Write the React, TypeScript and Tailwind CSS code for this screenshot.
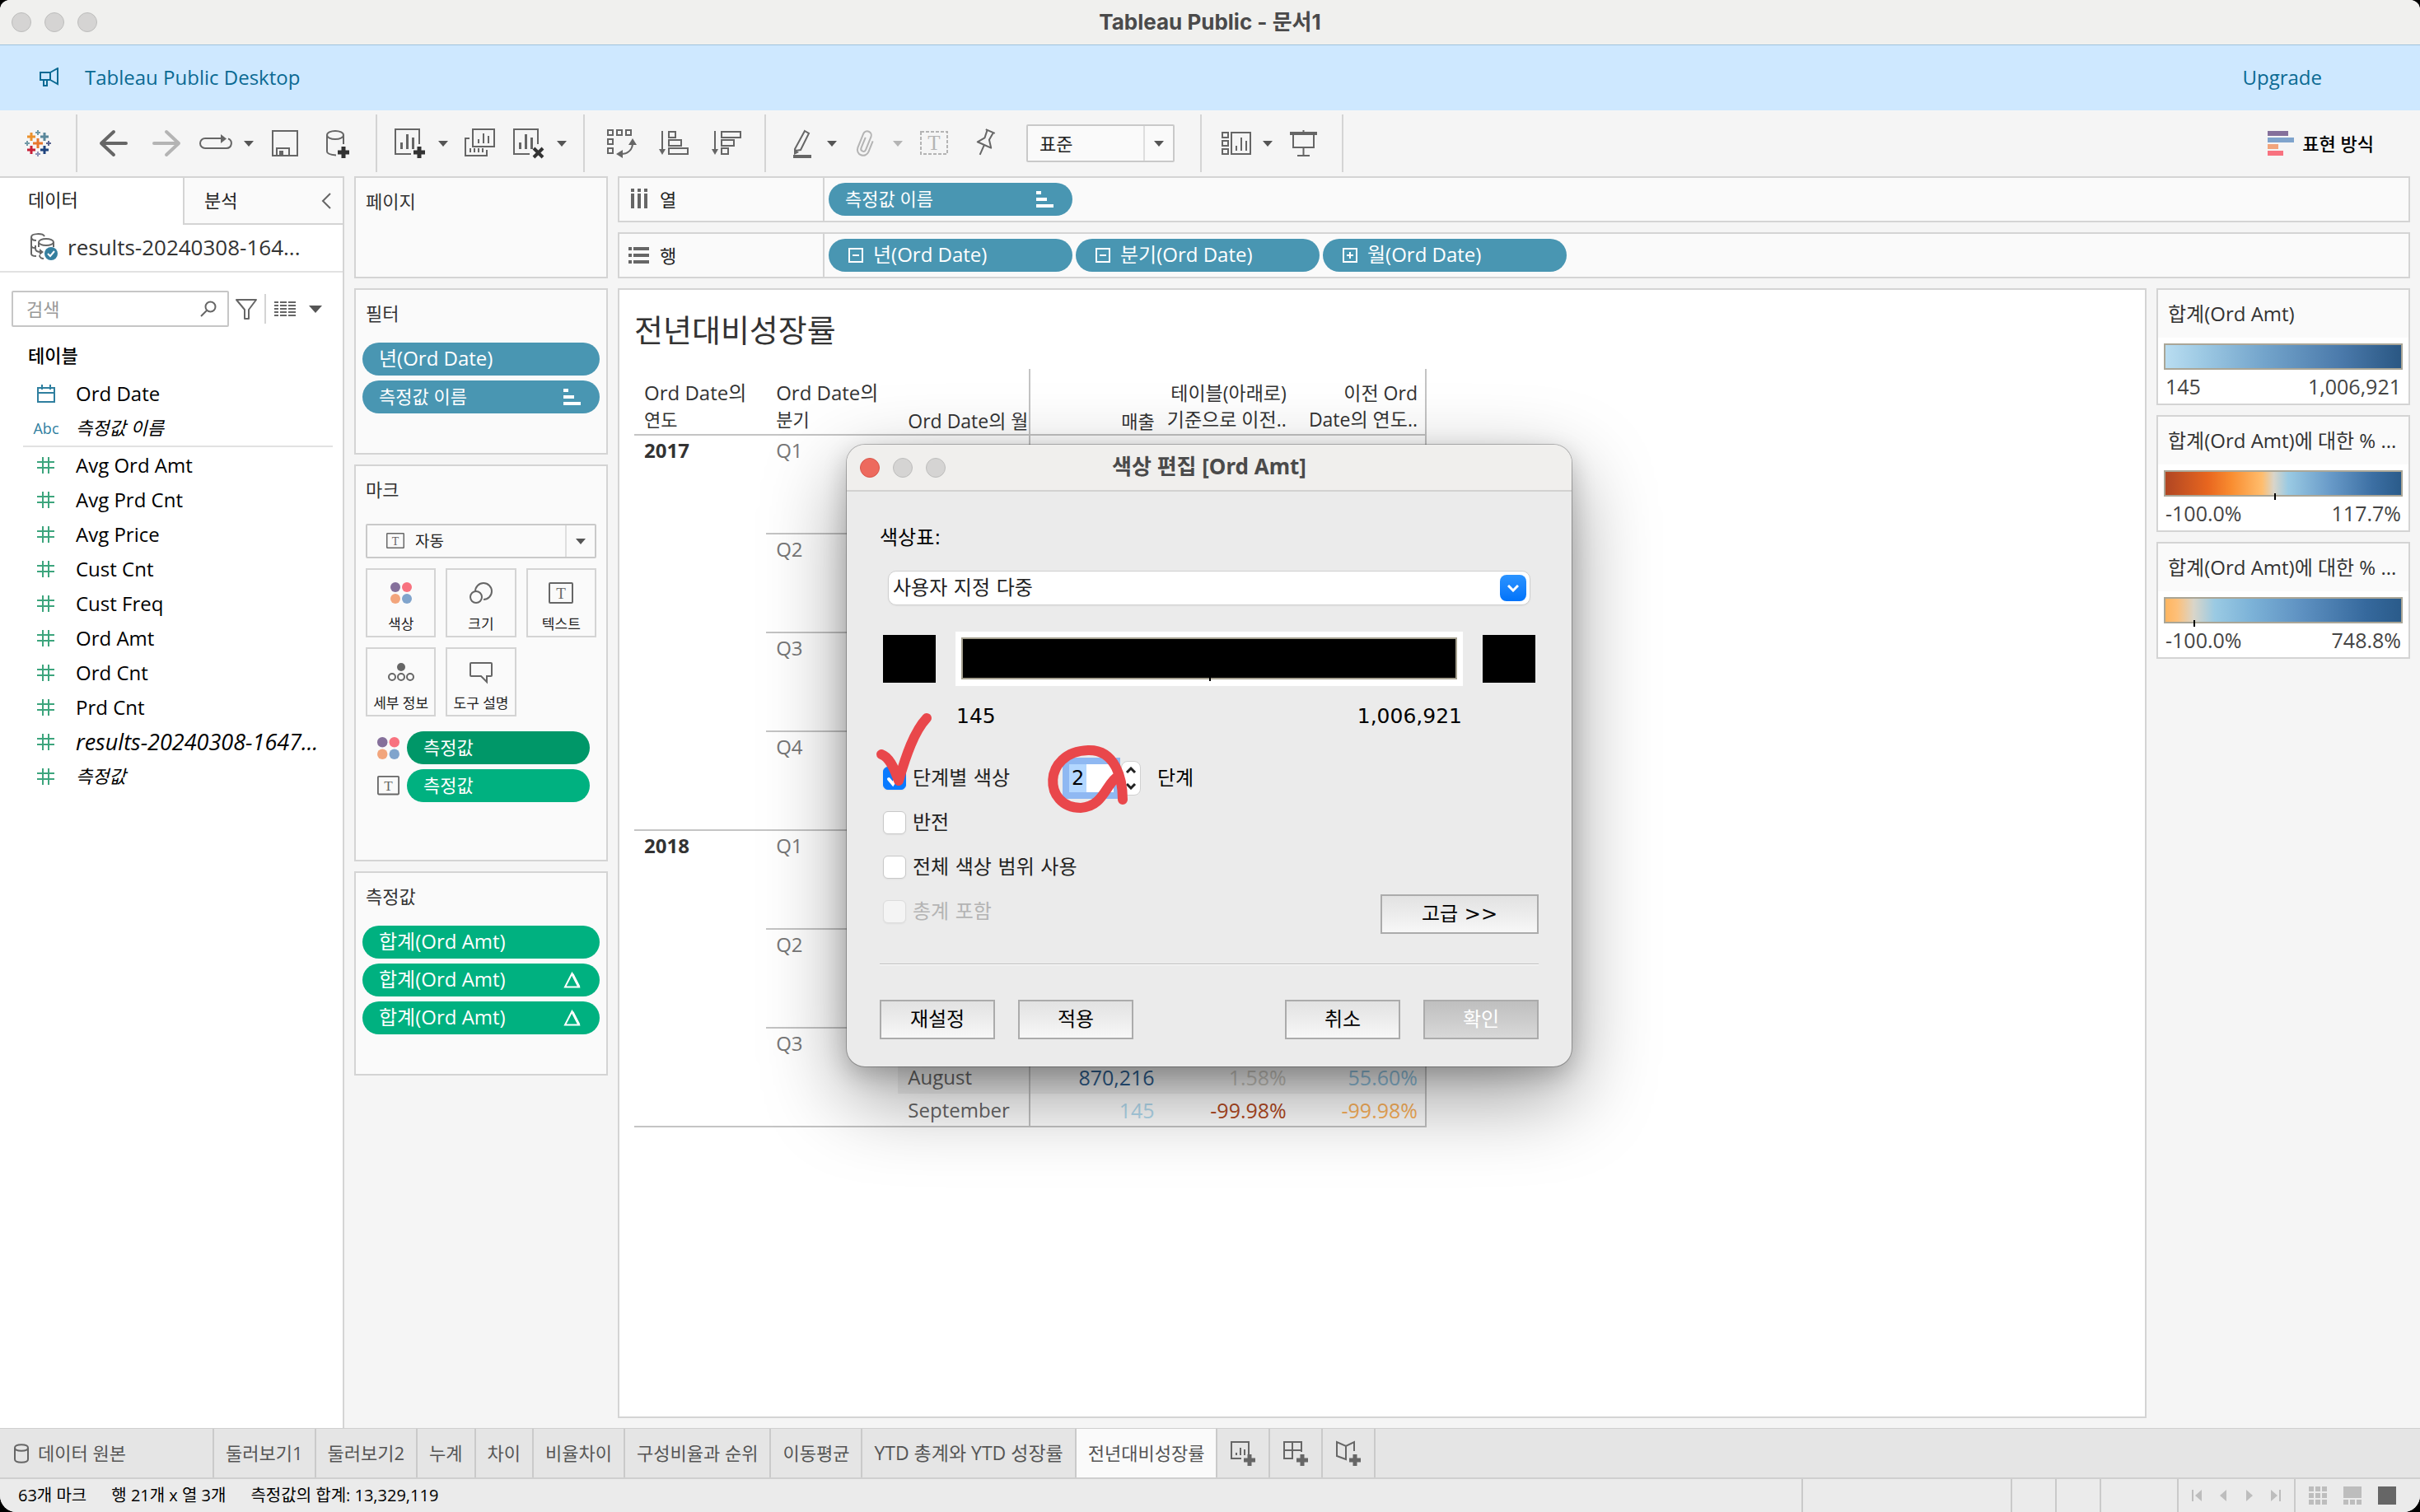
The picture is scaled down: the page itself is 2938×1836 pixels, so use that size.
import type { ReactNode } from "react";
import clsx from "clsx";

const fields = [
  "Avg Ord Amt",
  "Avg Prd Cnt",
  "Avg Price",
  "Cust Cnt",
  "Cust Freq",
  "Ord Amt",
  "Ord Cnt",
  "Prd Cnt",
];

const sheets = [
  "둘러보기1",
  "둘러보기2",
  "누계",
  "차이",
  "비율차이",
  "구성비율과 순위",
  "이동평균",
  "YTD 총계와 YTD 성장률",
  "전년대비성장률",
];

const years = [
  { year: "2017", quarters: ["Q1", "Q2", "Q3", "Q4"] },
  { year: "2018", quarters: ["Q1", "Q2", "Q3"] },
];

type Month = { name: string; cells: { value: string; color: string }[] };

const months: Record<string, Month> = {
  "2018-Q3-1": {
    name: "August",
    cells: [
      { value: "870,216", color: "text-[#2f5f8f]" },
      { value: "1.58%", color: "text-[#c8c6bf]" },
      { value: "55.60%", color: "text-[#8fbfdb]" },
    ],
  },
  "2018-Q3-2": {
    name: "September",
    cells: [
      { value: "145", color: "text-[#b4dcf0]" },
      { value: "-99.98%", color: "text-[#b34a23]" },
      { value: "-99.98%", color: "text-[#fdb35c]" },
    ],
  },
};

const legends = [
  {
    title: "합계(Ord Amt)",
    min: "145",
    max: "1,006,921",
    ramp: "bg-[linear-gradient(90deg,#b9ddf1,#9ecae4_15%,#73a4cb_42%,#4a79aa_75%,#2a5783)]",
    tick: null,
  },
  {
    title: "합계(Ord Amt)에 대한 % ...",
    min: "-100.0%",
    max: "117.7%",
    ramp: "bg-[linear-gradient(90deg,#b04623,#e8661f_18%,#f98d30_28%,#ffbd6d_41%,#d9d5c9_46%,#9acae3_52%,#689ac8_70%,#3c6fa3_88%,#2a5b8a)]",
    tick: 46,
  },
  {
    title: "합계(Ord Amt)에 대한 % ...",
    min: "-100.0%",
    max: "748.8%",
    ramp: "bg-[linear-gradient(90deg,#ffb55f,#fdc07a_5%,#d9d5c9_12%,#9acae3_21%,#7db3d8_36%,#5f92c2_57%,#36699d_85%,#2a5b8a)]",
    tick: 12,
  },
];

const Glyph = ({
  children,
  className,
  box = 40,
}: {
  children: ReactNode;
  className?: string;
  box?: number;
}) => (
  <svg
    viewBox={`0 0 ${box} ${box}`}
    className={clsx("shrink-0", className ?? "size-10")}
    fill="none"
    stroke="#666"
    strokeWidth="2"
    aria-hidden="true"
  >
    {children}
  </svg>
);

const Caret = ({ className = "text-[#555]" }: { className?: string }) => (
  <svg
    viewBox="0 0 12 7"
    className={clsx("w-3 shrink-0", className)}
    aria-hidden="true"
  >
    <path d="M0 0h12L6 7z" fill="currentColor" />
  </svg>
);

const Tool = ({ label, children }: { label: string; children: ReactNode }) => (
  <button
    type="button"
    aria-label={label}
    className="flex h-full w-16 items-center justify-center"
  >
    {children}
  </button>
);

const SplitTool = ({
  label,
  children,
  caret,
}: {
  label: string;
  children: ReactNode;
  caret?: string;
}) => (
  <button
    type="button"
    aria-label={label}
    className="flex h-full w-20 items-center gap-[14px] pl-2"
  >
    {children}
    <Caret className={caret} />
  </button>
);

const ToolGroup = ({ children }: { children: ReactNode }) => (
  <div className="flex h-[70px] items-center border-r-2 border-[#d4d4d4] pl-3 pr-[14px]">
    {children}
  </div>
);

const TextMark = ({ className }: { className?: string }) => (
  <svg viewBox="0 0 30 26" className={clsx("shrink-0", className)} fill="none">
    <rect x="1" y="1" width="28" height="24" rx="1" stroke="#666" strokeWidth="2" />
    <text
      x="15"
      y="20"
      textAnchor="middle"
      fontSize="19"
      fill="#666"
      className="font-['Liberation_Serif',serif]"
    >
      T
    </text>
  </svg>
);

const ColorDots = ({ className }: { className?: string }) => (
  <svg viewBox="0 0 26 26" className={clsx("shrink-0", className)}>
    <circle cx="6" cy="6" r="6" fill="#85709b" />
    <circle cx="20" cy="6" r="6" fill="#f8727f" />
    <circle cx="6" cy="20" r="6" fill="#f2a57c" />
    <circle cx="20" cy="20" r="6" fill="#80a4cc" />
  </svg>
);

const SheetBars = () => (
  <path d="M9.500 19v8M16.500 9v18M23.500 13v14" strokeWidth="3" />
);

const SortBars = () => (
  <svg viewBox="0 0 22 20" className="w-[22px] shrink-0" fill="#fff">
    <path d="M0 0h6v4H0zM0 8h13v4H0zM0 16h21v4H0z" />
  </svg>
);

const Delta = () => (
  <svg viewBox="0 0 22 20" className="w-[22px] shrink-0" fill="none" stroke="#fff">
    <path d="M2 18.500 10.500 2l8.500 16.500z" strokeWidth="2" />
    <path d="m11 3 8 15.500" strokeWidth="3" />
  </svg>
);

const Expander = ({ open }: { open: boolean }) => (
  <svg viewBox="0 0 18 18" className="ml-1 size-[18px] shrink-0" fill="none" stroke="#fff">
    <path
      d={open ? "M1 1h16v16H1zM5 9h8" : "M1 1h16v16H1zM5 9h8M9 5v8"}
      strokeWidth="2"
    />
  </svg>
);

const Pill = ({
  children,
  lead,
  trail,
  className,
}: {
  children: ReactNode;
  lead?: ReactNode;
  trail?: ReactNode;
  className?: string;
}) => (
  <button
    type="button"
    className={clsx(
      "flex h-10 items-center gap-3 rounded-full pl-5 pr-[22px] leading-8 text-white",
      className,
    )}
  >
    {lead}
    <span className="flex-1 pb-[2px] text-left">{children}</span>
    {trail}
  </button>
);

const Card = ({
  title,
  className,
  children,
}: {
  title: string;
  className?: string;
  children?: ReactNode;
}) => (
  <section className={clsx("border-2 border-[#d4d4d4] bg-[#fafafa] pt-3", className)}>
    <h2 className="px-3 text-[22px] leading-8 text-[#333]">{title}</h2>
    {children}
  </section>
);

const Dots = ({ close }: { close?: boolean }) => (
  <div className="flex gap-4">
    {["닫기", "최소화", "확대"].map((label, i) => (
      <button
        key={label}
        type="button"
        aria-label={label}
        className={clsx(
          "size-6 rounded-full border",
          close && i === 0
            ? "border-[#d8564b] bg-[#ed6a5e]"
            : "border-[#bdbdbc] bg-[#d5d4d3]",
        )}
      />
    ))}
  </div>
);

const Toolbar = () => (
  <div className="flex h-20 items-center">
    <div className="flex h-[70px] w-[94px] items-center border-r-2 border-[#d4d4d4] pl-[26px]">
      <Glyph>
        <g strokeWidth="3">
          <path d="M20 14v12M14 20h12" stroke="#e8762d" />
          <path d="M12 7v10M7 12h10" stroke="#eb912c" />
          <path d="M28 7v10M23 12h10" stroke="#59879b" />
          <path d="M12 23v10M7 28h10" stroke="#c72037" />
          <path d="M28 23v10M23 28h10" stroke="#1f447e" />
        </g>
        <path d="M20 4v6M17 7h6M7 17v6M4 20h6" stroke="#7199a6" />
        <path d="M33 17v6M30 20h6" stroke="#5b6591" />
        <path d="M20 30v6M17 33h6" stroke="#8a93b8" />
      </Glyph>
    </div>

    <ToolGroup>
      <Tool label="뒤로">
        <Glyph>
          <path
            d="M35 20H5M20 6 5 20l15 14"
            strokeWidth="4"
            strokeLinecap="round"
            strokeLinejoin="round"
          />
        </Glyph>
      </Tool>
      <Tool label="앞으로">
        <Glyph>
          <path
            d="M5 20h30M20 6l15 14-15 14"
            stroke="#b4b4b4"
            strokeWidth="4"
            strokeLinecap="round"
            strokeLinejoin="round"
          />
        </Glyph>
      </Tool>
      <SplitTool label="재생">
        <Glyph>
          <path d="M27 14H7a6 6 0 0 0 0 12h26a6 6 0 0 0 2-11.600" />
          <path d="M26 9v11l7-5.500z" fill="#666" stroke="none" />
        </Glyph>
      </SplitTool>
      <Tool label="저장">
        <Glyph>
          <path d="M5 5h30v30H5zM10 35v-9h15v9" />
          <path d="M13 29h5v6h-5z" fill="#666" stroke="none" />
        </Glyph>
      </Tool>
      <Tool label="새 데이터 원본">
        <Glyph>
          <ellipse cx="17" cy="10" rx="10" ry="5" />
          <path d="M7 10v20c0 3 5 4 11 4.500M27 10v11" />
          <path d="M27 24v14M20 31h14" stroke="#333" strokeWidth="5" />
        </Glyph>
      </Tool>
    </ToolGroup>

    <ToolGroup>
      <SplitTool label="새 워크시트">
        <Glyph>
          <path d="M31 21V3H2v30h19" />
          <SheetBars />
          <path d="M31 24v14M24 31h14" stroke="#333" strokeWidth="5" />
        </Glyph>
      </SplitTool>
      <Tool label="복제">
        <Glyph>
          <path d="M12 3h26v21H12zM8 14H3v21h26v-7" />
          <path d="M19 15v5M25 8v12M31 11v9M9 26v5M14 26v5M19 26v5M24 26v5" />
        </Glyph>
      </Tool>
      <SplitTool label="시트 지우기">
        <Glyph>
          <path d="M31 21V3H2v30h19" />
          <SheetBars />
          <path d="m26 26 11 11M37 26 26 37" stroke="#333" strokeWidth="4" />
        </Glyph>
      </SplitTool>
    </ToolGroup>

    <ToolGroup>
      <Tool label="행과 열 바꾸기">
        <Glyph>
          <path d="M4 4h6v6H4zM15 4h6v6h-6zM26 4h6v6h-6zM4 15h6v6H4zM4 26h6v6H4z" />
          <path d="M34 20c0 7-5 13-14 13" />
          <path d="M29 22h10l-5-8zM22 28v10l-8-5z" fill="#666" stroke="none" />
        </Glyph>
      </Tool>
      <Tool label="오름차순 정렬">
        <Glyph>
          <path d="M6 5v24M14 6h8v7h-8zM14 16h15v7H14zM14 26h23v7H14z" />
          <path d="M2 27h8l-4 7z" fill="#666" stroke="none" />
        </Glyph>
      </Tool>
      <Tool label="내림차순 정렬">
        <Glyph>
          <path d="M6 5v24M14 6h23v7H14zM14 16h15v7H14zM14 26h8v7h-8z" />
          <path d="M2 27h8l-4 7z" fill="#666" stroke="none" />
        </Glyph>
      </Tool>
    </ToolGroup>

    <ToolGroup>
      <SplitTool label="하이라이트">
        <Glyph>
          <path d="m27 5 5 3-10 20-6 1-1-2z" />
          <path d="m14 27 6 4-6 3z" fill="#666" stroke="none" />
          <path d="M13 36h22" strokeWidth="4" />
        </Glyph>
      </SplitTool>
      <SplitTool label="그룹" caret="text-[#b4b4b4]">
        <Glyph>
          <path
            d="M28 14v14a7 7 0 0 1-14 0V10a5 5 0 0 1 10 0v17a3 3 0 0 1-6 0V13"
            stroke="#b4b4b4"
            transform="rotate(22 20 20)"
          />
        </Glyph>
      </SplitTool>
      <Tool label="마크 레이블 표시">
        <Glyph>
          <path d="M4 6h32v27H4z" stroke="#b4b4b4" strokeDasharray="4 2" />
          <text
            x="20"
            y="28"
            textAnchor="middle"
            fontSize="25"
            fill="#b4b4b4"
            stroke="none"
            className="font-['Liberation_Serif',serif]"
          >
            T
          </text>
        </Glyph>
      </Tool>
      <Tool label="축 고정">
        <Glyph>
          <path
            d="M12 5h12M14 5l1 10-6 8h18l-6-8 1-10M18 23v13"
            strokeLinejoin="round"
            transform="rotate(24 20 20)"
          />
        </Glyph>
      </Tool>
      <label className="relative ml-4 mr-[17px] block h-[46px] w-[180px] rounded-xs border-2 border-[#c9c9c9] bg-[#fafafa]">
        <select
          aria-label="맞춤"
          className="h-full w-full appearance-none bg-transparent pl-[14px] text-[22px] text-[#222]"
        >
          <option>표준</option>
        </select>
        <span className="pointer-events-none absolute inset-y-0 right-0 flex w-9 items-center justify-center border-l-2 border-[#dedede]">
          <Caret />
        </span>
      </label>
    </ToolGroup>

    <ToolGroup>
      <SplitTool label="카드 표시">
        <Glyph>
          <path d="M5 7h7v6H5zM5 17h7v6H5zM5 27h7v6H5z" />
          <path d="M16 7h23v26H16z" />
          <path d="M22 23v6M28 13v16M34 17v12" />
        </Glyph>
      </SplitTool>
      <Tool label="프레젠테이션 모드">
        <Glyph>
          <path d="M7 8v17h25V8M19.500 4v4M19.500 25v10M12 35h15" />
          <path d="M3 8h33" strokeWidth="4" />
        </Glyph>
      </Tool>
    </ToolGroup>

    <button
      type="button"
      className="ml-auto mr-14 flex items-center gap-[10px] text-[22px] font-medium text-black"
    >
      <svg viewBox="0 0 32 30" className="w-8">
        <path d="M0 0h25v6H0z" fill="#85709b" />
        <path d="M0 8h32v6H0z" fill="#80a4cc" />
        <path d="M0 16h13v6H0z" fill="#f2a57c" />
        <path d="M0 24h19v6H0z" fill="#f8727f" />
      </svg>
      표현 방식
    </button>
  </div>
);

const FieldIcon = ({ kind }: { kind: "date" | "text" | "number" }) => {
  if (kind === "text") {
    return <span className="text-[18px] text-[#2f7f9f]">Abc</span>;
  }

  return (
    <Glyph box={24} className="size-6">
      {kind === "date" ? (
        <path d="M2 5h20v17H2zM2 11h20M7 1v6M17 1v6" stroke="#2f7f9f" />
      ) : (
        <path d="M8 2v20M15 2v20M1 8h21M1 15h21" stroke="#3da57d" />
      )}
    </Glyph>
  );
};

const Field = ({
  kind = "number",
  className,
  children,
}: {
  kind?: "date" | "text" | "number";
  className?: string;
  children: ReactNode;
}) => (
  <li className="flex h-[42px] items-center text-black">
    <span className="mr-2 flex w-14 shrink-0 justify-center">
      <FieldIcon kind={kind} />
    </span>
    <span className={clsx("whitespace-nowrap", className)}>{children}</span>
  </li>
);

const DataPane = () => (
  <aside className="w-[418px] shrink-0 border-r-2 border-t-2 border-[#d4d4d4] bg-white">
    <div className="flex h-[57px] text-[22px] text-[#222]">
      <button type="button" className="w-[222px] pb-1 pl-[34px] text-left">
        데이터
      </button>
      <button
        type="button"
        className="flex flex-1 items-center justify-between border-b-2 border-l-2 border-[#d4d4d4] bg-[#fafafa] pl-6 pr-[14px]"
      >
        분석
        <svg viewBox="0 0 12 20" className="w-3" fill="none" stroke="#666">
          <path d="m11 1-9 9 9 9" strokeWidth="2" />
        </svg>
      </button>
    </div>

    <div className="flex h-[58px] items-center gap-3 border-b-2 border-[#e2e2e2] pb-[2px] pl-9 text-[26px] text-[#333]">
      <Glyph box={34} className="size-[34px]">
        <path d="M2 5v20c0 2 3 3 6 3M2 5c0-5 14-5 16-1M2 5c0 2 2 4 6 4M2 15c0 2 2 3 4 3" />
        <ellipse cx="20" cy="11" rx="9" ry="4" />
        <path d="M11 11v6M29 11v6M7 15v4c0 3 3 4 7 4M12 27c0 3 3 4 5 4" />
        <path d="m12 19 5 4-5 4z" fill="#666" stroke="none" />
        <circle cx="26" cy="25" r="8" fill="#357f9f" stroke="none" />
        <path d="m22 25 3 3 5-6" stroke="#fff" />
      </Glyph>
      results-20240308-164...
    </div>

    <div className="mt-[22px] flex h-11 items-center pl-[14px]">
      <label className="flex h-full w-[264px] items-center rounded-xs border-2 border-[#c6c6c6] pl-4 pr-[13px]">
        <input
          aria-label="검색"
          placeholder="검색"
          className="w-full min-w-0 text-[22px] outline-none placeholder:text-[#999]"
        />
        <Glyph box={20} className="size-5">
          <circle cx="12.500" cy="7.500" r="6" />
          <path d="m8 12-7 7" />
        </Glyph>
      </label>
      <button type="button" aria-label="필터" className="ml-[7px]">
        <Glyph box={28} className="size-7">
          <path d="M2 3h24L17 15v11h-5V15z" strokeLinejoin="round" />
        </Glyph>
      </button>
      <button
        type="button"
        aria-label="보기"
        className="ml-2 flex h-9 items-center gap-4 border-l-2 border-[#d4d4d4] pl-[10px]"
      >
        <svg viewBox="0 0 26 20" className="w-[26px]" stroke="#666" strokeWidth="2">
          <path
            d="M0 2h5M7 2h8M17 2h9M0 6h5M7 6h8M17 6h9M0 10h5M7 10h8M17 10h9M0 14h5M7 14h8M17 14h9M0 18h5M7 18h8M17 18h9"
            fill="none"
          />
        </svg>
        <svg viewBox="0 0 16 9" className="w-4">
          <path d="M0 0h16L8 9z" fill="#555" />
        </svg>
      </button>
    </div>

    <h2 className="mb-[10px] mt-[18px] pl-[34px] text-[22px] font-medium leading-8 text-black">
      테이블
    </h2>
    <ul className="pl-7 pr-3 text-2xl">
      <Field kind="date">Ord Date</Field>
      <Field kind="text" className="text-[22px] italic">
        측정값 이름
      </Field>
    </ul>
    <hr className="ml-7 mr-3 border-t-2 border-[#e2e2e2]" />
    <ul className="pl-7 pr-3 pt-px text-2xl">
      {fields.map((name) => (
        <Field key={name}>{name}</Field>
      ))}
      <Field className="text-[27px] italic">results-20240308-1647...</Field>
      <Field className="text-[22px] italic">측정값</Field>
    </ul>
  </aside>
);

const MarkButton = ({ label, children }: { label: string; children: ReactNode }) => (
  <button
    type="button"
    className="flex h-[84px] flex-col items-center border-2 border-[#d4d4d4] pt-[14px] text-[17px] leading-6 text-[#222]"
  >
    <span className="flex h-7 items-center">{children}</span>
    <span className="mt-3">{label}</span>
  </button>
);

const Cards = () => (
  <div className="flex w-[308px] shrink-0 flex-col gap-3">
    <Card title="페이지" className="h-[124px]" />

    <Card title="필터" className="h-[202px]">
      <div className="mt-5 flex flex-col gap-[6px] px-2 text-2xl">
        <Pill className="bg-[#4996b2]">년(Ord Date)</Pill>
        <Pill className="bg-[#4996b2] text-[22px]" trail={<SortBars />}>
          측정값 이름
        </Pill>
      </div>
    </Card>

    <Card title="마크" className="h-[482px]">
      <div className="mt-[26px] px-3">
        <label className="relative block h-[42px] rounded-xs border-2 border-[#c9c9c9]">
          <TextMark className="absolute left-[23px] top-[9px] w-[22px]" />
          <select
            aria-label="마크 유형"
            className="h-full w-full appearance-none pl-[58px] text-[19px] text-[#222]"
          >
            <option>자동</option>
          </select>
          <span className="pointer-events-none absolute inset-y-0 right-0 flex w-9 items-center justify-center border-l-2 border-[#dedede]">
            <Caret />
          </span>
        </label>

        <div className="mt-3 grid grid-cols-3 gap-3">
          <MarkButton label="색상">
            <ColorDots className="w-[26px]" />
          </MarkButton>
          <MarkButton label="크기">
            <Glyph box={30} className="size-[30px]">
              <path d="M8 14a10 10 0 1 1 10 10" transform="translate(0 -1)" />
              <circle cx="9" cy="20" r="7" />
            </Glyph>
          </MarkButton>
          <MarkButton label="텍스트">
            <TextMark className="w-[30px]" />
          </MarkButton>
          <MarkButton label="세부 정보">
            <svg viewBox="0 0 32 24" className="w-8" fill="none" stroke="#666">
              <circle cx="16" cy="6" r="5" fill="#666" stroke="none" />
              <g strokeWidth="2">
                <circle cx="5" cy="18" r="4" />
                <circle cx="16" cy="18" r="4" />
                <circle cx="27" cy="18" r="4" />
              </g>
            </svg>
          </MarkButton>
          <MarkButton label="도구 설명">
            <Glyph box={30} className="size-[30px]">
              <path
                d="M3 4h24q1 0 1 1v14q0 1-1 1h-5v7l-7-7H3q-1 0-1-1V5q0-1 1-1z"
              />
            </Glyph>
          </MarkButton>
        </div>
      </div>

      <div className="mt-[18px] flex flex-col gap-[6px] pl-[26px] pr-5">
        <div className="flex items-center gap-[9px]">
          <ColorDots className="w-[27px]" />
          <Pill className="flex-1 bg-[#009768] text-[22px]">측정값</Pill>
        </div>
        <div className="flex items-center gap-[9px]">
          <TextMark className="w-[27px]" />
          <Pill className="flex-1 bg-[#00b180] text-[22px]">측정값</Pill>
        </div>
      </div>
    </Card>

    <Card title="측정값" className="h-[248px]">
      <div className="mt-5 flex flex-col gap-[6px] px-2 text-2xl">
        <Pill className="bg-[#00b180]">합계(Ord Amt)</Pill>
        <Pill className="bg-[#00b180]" trail={<Delta />}>
          합계(Ord Amt)
        </Pill>
        <Pill className="bg-[#00b180]" trail={<Delta />}>
          합계(Ord Amt)
        </Pill>
      </div>
    </Card>
  </div>
);

const Shelf = ({
  title,
  icon,
  children,
}: {
  title: string;
  icon: ReactNode;
  children: ReactNode;
}) => (
  <div className="flex h-14 items-center border-2 border-[#d4d4d4] bg-[#fafafa]">
    <div className="flex h-full w-[249px] items-center gap-3 border-r-2 border-[#d4d4d4] pl-[11px] text-[22px] text-[#222]">
      {icon}
      {title}
    </div>
    <div className="flex gap-1 pl-[5px] text-2xl">{children}</div>
  </div>
);

const head = "px-3 pb-[2px] align-bottom font-normal";

const Crosstab = () => (
  <table className="w-[962px] table-fixed border-collapse text-2xl text-[#333]">
    <thead>
      <tr className="h-20 border-b-2 border-[#c4c4c4] leading-8">
        <th className={clsx(head, "text-left")}>
          Ord Date의
          <br />
          <span className="text-[22px]">연도</span>
        </th>
        <th className={clsx(head, "text-left")}>
          Ord Date의
          <br />
          <span className="text-[22px]">분기</span>
        </th>
        <th className="whitespace-nowrap border-r-2 border-[#c4c4c4] pl-3 text-left align-bottom text-[23px] font-normal">
          Ord Date의 월
        </th>
        <th className="pr-[9px] text-right align-bottom text-[22px] font-normal">매출</th>
        <th className="whitespace-nowrap pb-[2px] pr-[9px] text-right align-bottom text-[23px] font-normal">
          테이블(아래로)
          <br />
          기준으로 이전..
        </th>
        <th className="whitespace-nowrap border-r-2 border-[#c4c4c4] pb-[2px] pr-[9px] text-right align-bottom text-[23px] font-normal">
          이전 Ord
          <br />
          Date의 연도..
        </th>
      </tr>
    </thead>
    {years.map(({ year, quarters }) => (
      <tbody key={year} className="border-b-2 border-[#c4c4c4]">
        {quarters.flatMap((quarter, q) =>
          [0, 1, 2].map((m) => {
            const month = months[`${year}-${quarter}-${m}`];
            const band = month?.name === "August" && "bg-[#f2f2f2]";

            return (
              <tr key={`${quarter}-${m}`} className="h-10 leading-8">
                {q === 0 && m === 0 && (
                  <th
                    rowSpan={quarters.length * 3}
                    className="px-3 pt-[2px] text-left align-top font-bold"
                  >
                    {year}
                  </th>
                )}
                {m === 0 && (
                  <th
                    rowSpan={3}
                    className={clsx(
                      "px-3 pt-[2px] text-left align-top font-normal text-[#777]",
                      q > 0 && "border-t-2 border-[#c4c4c4]",
                    )}
                  >
                    {quarter}
                  </th>
                )}
                <th
                  className={clsx(
                    "border-r-2 border-[#c4c4c4] pl-3 text-left font-normal text-[#666]",
                    band,
                    q > 0 && m === 0 && "border-t-2",
                  )}
                >
                  {month?.name}
                </th>
                {[0, 1, 2].map((i) => (
                  <td
                    key={i}
                    className={clsx(
                      "pr-[9px] text-right text-[25px]",
                      band,
                      month?.cells[i].color,
                      i === 2 && "border-r-2 border-r-[#c4c4c4]",
                    )}
                  >
                    {month?.cells[i].value}
                  </td>
                ))}
              </tr>
            );
          }),
        )}
      </tbody>
    ))}
  </table>
);

const Legend = ({ title, min, max, ramp, tick }: (typeof legends)[number]) => (
  <section className="h-[142px] border-2 border-[#d4d4d4] bg-white">
    <h3 className="h-[58px] whitespace-nowrap bg-[#fafafa] pl-3 text-2xl leading-[58px] text-[#333]">
      {title}
    </h3>
    <div className="px-[7px] pt-[7px]">
      <div className={clsx("relative h-8 border-2 border-[#aaa697]", ramp)}>
        {tick !== null && (
          <span
            className="absolute top-[26px] h-2 w-[2px] bg-black"
            style={{ left: `${tick}%` }}
          />
        )}
      </div>
      <div className="flex justify-between px-[2px] pt-1 text-[25px] leading-8 text-[#444]">
        <span>{min}</span>
        <span>{max}</span>
      </div>
    </div>
  </section>
);

const DialogButton = ({
  children,
  disabled,
  className,
}: {
  children: ReactNode;
  disabled?: boolean;
  className?: string;
}) => (
  <button
    type="button"
    disabled={disabled}
    className={clsx(
      "h-12 border-2 border-[#ababab]",
      disabled
        ? "bg-linear-to-b from-[#bfbfbf] to-[#d8d8d8] text-white"
        : "bg-linear-to-b from-[#e2e2e2] to-[#f7f7f7] text-black",
      className ?? "w-[140px]",
    )}
  >
    {children}
  </button>
);

const Option = ({
  label,
  checked,
  disabled,
}: {
  label: string;
  checked?: boolean;
  disabled?: boolean;
}) => (
  <label
    className={clsx(
      "flex h-[54px] items-center gap-2",
      disabled ? "text-[#b4b4b4]" : "text-[#222]",
    )}
  >
    <span className="relative flex">
      <input
        type="checkbox"
        defaultChecked={checked}
        disabled={disabled}
        className="size-7 appearance-none rounded-md border border-[#c8c8c8] bg-white shadow-xs checked:border-[#0a7aff] checked:bg-[#0a7aff] disabled:border-[#dcdcdc] disabled:bg-[#f4f4f4]"
      />
      {checked && (
        <svg
          viewBox="0 0 28 28"
          className="pointer-events-none absolute inset-0"
          fill="none"
          stroke="#fff"
          strokeWidth="4"
          strokeLinecap="round"
        >
          <path d="m7 15 5 6 9-14" />
        </svg>
      )}
    </span>
    {label}
  </label>
);

const ColorDialog = () => (
  <div
    role="dialog"
    aria-label="색상 편집"
    className="absolute left-[1028px] top-[540px] w-[880px] rounded-[22px] bg-[#ebebeb] font-['DejaVu_Sans','Noto_Sans_CJK_KR',sans-serif] text-2xl text-black shadow-[0_0_0_1px_rgba(0,0,0,0.25),0_10px_30px_rgba(0,0,0,0.2),0_36px_100px_rgba(0,0,0,0.4)]"
  >
    <div className="relative flex h-[57px] items-center rounded-t-[22px] border-b-2 border-[#d2d1d0] bg-[#f0efed] pl-4">
      <Dots close />
      <h2 className="pointer-events-none absolute inset-x-0 pb-[2px] text-center font-['Noto_Sans','Noto_Sans_CJK_KR',sans-serif] text-[26px] font-bold text-[#4a4a4a]">
        색상 편집 [Ord Amt]
      </h2>
    </div>

    <div className="px-10 pb-[33px] pt-10">
      <label htmlFor="palette" className="block leading-8">
        색상표:
      </label>
      <div className="relative mx-[10px] mt-6 h-[42px] rounded-[10px] border border-[#d0d0d0] bg-white shadow-xs">
        <select id="palette" className="h-full w-full appearance-none pl-[5px] text-[#222]">
          <option>사용자 지정 다중</option>
        </select>
        <span className="pointer-events-none absolute right-1 top-1 flex size-8 items-center justify-center rounded-lg bg-linear-to-b from-[#2a93ff] to-[#0073fa]">
          <svg viewBox="0 0 14 9" className="w-[14px]" fill="none" stroke="#fff">
            <path d="m1 1 6 6 6-6" strokeWidth="3" />
          </svg>
        </span>
      </div>

      <div className="mt-8 flex items-center gap-6 px-1">
        <button type="button" aria-label="시작 색상" className="h-[58px] w-16 bg-black" />
        <div className="relative h-[66px] flex-1 bg-white p-[7px]">
          <div className="h-[51px] border-2 border-[#a5a08f] bg-black" />
          <span className="absolute bottom-[6px] left-1/2 h-2 w-[2px] bg-black" />
        </div>
        <button type="button" aria-label="끝 색상" className="h-[58px] w-16 bg-black" />
      </div>
      <div className="mt-[21px] flex justify-between px-[93px] text-[25px] leading-8">
        <span>145</span>
        <span>1,006,921</span>
      </div>

      <div className="mt-8 flex items-end justify-between pl-1">
        <div>
          <div className="flex items-center">
            <div className="w-[226px]">
              <Option label="단계별 색상" checked />
            </div>
            <input
              aria-label="단계 수"
              defaultValue="2"
              className="h-[34px] w-[54px] bg-[linear-gradient(90deg,#b3d7ff_21px,white_21px)] pl-[3px] outline-8 outline-[#8fb8f2]"
            />
            <span className="ml-[9px] flex h-[42px] w-6 flex-col items-center justify-around rounded-lg border border-[#d0d0d0] bg-white">
              <button type="button" aria-label="늘리기">
                <svg viewBox="0 0 14 8" className="w-[14px]" fill="none" stroke="#222">
                  <path d="m2 7 5-5 5 5" strokeWidth="3" />
                </svg>
              </button>
              <button type="button" aria-label="줄이기">
                <svg viewBox="0 0 14 8" className="w-[14px]" fill="none" stroke="#222">
                  <path d="m2 1 5 5 5-5" strokeWidth="3" />
                </svg>
              </button>
            </span>
            <span className="ml-5">단계</span>
          </div>
          <Option label="반전" />
          <Option label="전체 색상 범위 사용" />
          <Option label="총계 포함" disabled />
        </div>
        <DialogButton className="w-48">고급 &gt;&gt;</DialogButton>
      </div>

      <hr className="mt-9 h-[2px] border-b border-t border-b-white border-t-[#bdbdbd]" />

      <div className="mt-[42px] flex gap-7">
        <DialogButton>재설정</DialogButton>
        <DialogButton>적용</DialogButton>
        <DialogButton className="ml-auto w-[140px]">취소</DialogButton>
        <DialogButton disabled>확인</DialogButton>
      </div>
    </div>

    {/* hand-drawn highlights over the step controls */}
    <svg
      viewBox="0 0 340 130"
      className="pointer-events-none absolute left-[30px] top-[322px] w-[340px]"
      fill="none"
      stroke="#e9474b"
      strokeWidth="12"
      strokeLinecap="round"
      strokeLinejoin="round"
    >
      <path d="M12 54c9 3 15 15 21 32C42 55 52 26 67 10" />
      <path d="M305 109c0-24-8-61-42-60-56 2-55 70-9 70 28-1 31-31 46-39" />
    </svg>
  </div>
);

const SheetTabs = () => (
  <nav className="flex h-[62px] border-b-2 border-t border-[#cfcfcf] bg-[#e5e5e5] text-[22px] text-[#555]">
    <button
      type="button"
      className="flex w-[260px] items-center gap-[11px] border-r-2 border-[#cacaca] pl-[17px]"
    >
      <svg viewBox="0 0 18 24" className="w-[18px]" fill="none" stroke="#666">
        <path
          d="M1 5c0-5 16-5 16 0v14c0 5-16 5-16 0zM1 5c0 5 16 5 16 0"
          strokeWidth="2"
        />
      </svg>
      데이터 원본
    </button>
    {sheets.map((name, i) => (
      <button
        key={name}
        type="button"
        className={clsx(
          "whitespace-nowrap border-r-2 border-[#cacaca] px-[14px]",
          i === sheets.length - 1 && "bg-[#fafafa]",
          name.startsWith("YTD") && "text-[23px]",
        )}
      >
        {name}
      </button>
    ))}
    {[
      { label: "새 워크시트", d: "M23 18V2H2v20h12M8 18v-3M13 18V9M18 18v-7" },
      { label: "새 대시보드", d: "M23 14V2H2v20h11M2 12h21M12 2v20" },
      { label: "새 스토리", d: "M23 13V2l-10 5L2 2v17l11 4V7" },
    ].map(({ label, d }) => (
      <button
        key={label}
        type="button"
        aria-label={label}
        className="flex w-16 items-center justify-center border-r-2 border-[#cacaca]"
      >
        <Glyph box={32} className="size-8">
          <path d={d} />
          <path d="M24 17v14M17 24h14" strokeWidth="5" />
        </Glyph>
      </button>
    ))}
  </nav>
);

const StatusBar = () => (
  <footer className="flex h-10 items-center bg-[#ebebeb] text-[20px] text-black">
    <div className="flex flex-1 gap-[30px] pl-[22px]">
      <span>63개 마크</span>
      <span>행 21개 x 열 3개</span>
      <span>측정값의 합계: 13,329,119</span>
    </div>
    <div className="h-full w-[254px] border-l-2 border-[#cacaca]" />
    <div className="h-full w-[54px] border-l-2 border-[#cacaca]" />
    <div className="h-full w-[54px] border-l-2 border-[#cacaca]" />
    <div className="h-full w-[94px] border-l-2 border-[#cacaca]" />
    <div className="flex h-full w-[142px] items-center justify-between border-l-2 border-[#cacaca] px-4 text-[#bdbdbd]">
      {[
        { label: "처음", d: "M0 0h2v14H0zM12 0v14L4 7z" },
        { label: "이전", d: "M10 0v14L2 7z" },
        { label: "다음", d: "M2 0v14l8-7z" },
        { label: "마지막", d: "M10 0h2v14h-2zM0 0v14l8-7z" },
      ].map(({ label, d }) => (
        <button key={label} type="button" aria-label={label}>
          <svg viewBox="0 0 12 14" className="w-3" fill="currentColor">
            <path d={d} />
          </svg>
        </button>
      ))}
    </div>
    <div className="flex h-full w-[153px] items-center gap-5 border-l-2 border-[#cacaca] pl-4 text-[#bdbdbd]">
      <button type="button" aria-label="시트 정렬 보기">
        <svg viewBox="0 0 22 22" className="w-[22px]" fill="currentColor">
          <path d="M0 0h6v6H0zM8 0h6v6H8zM16 0h6v6h-6zM0 8h6v6H0zM8 8h6v6H8zM16 8h6v6h-6zM0 16h6v6H0zM8 16h6v6H8zM16 16h6v6h-6z" />
        </svg>
      </button>
      <button type="button" aria-label="필름 스트립">
        <svg viewBox="0 0 22 22" className="w-[22px]" fill="currentColor">
          <path d="M0 0h22v14H0zM0 16h6v6H0zM8 16h6v6H8zM16 16h6v6h-6z" />
        </svg>
      </button>
      <button type="button" aria-label="탭 보기" className="size-[22px] bg-[#666]" />
    </div>
  </footer>
);

const App = () => {
  return (
    <div className="bg-black font-['Open_Sans','Noto_Sans_CJK_KR',sans-serif]">
      <div className="relative flex min-h-screen flex-col overflow-hidden rounded-b-[20px] rounded-t-xl bg-[#f5f5f5]">
        <header className="relative flex h-[55px] items-center border-b border-[#9fc3dc] bg-[#f0f0ee] pl-[14px]">
          <Dots />
          <h1 className="pointer-events-none absolute inset-x-0 pb-[2px] text-center font-['Inter','Noto_Sans_CJK_KR',sans-serif] text-[26px] font-bold text-[#4a4a4a]">
            Tableau Public - 문서1
          </h1>
        </header>

        <div className="flex h-[79px] items-center bg-[#cee8ff] pb-[2px] pl-12 pr-[119px] text-2xl text-[#0b6a93]">
          <svg viewBox="0 0 24 24" className="mr-[31px] w-6" fill="none" stroke="#0b6a93">
            <path
              d="M1 6h12v9H1zM13 6l9-5v19l-9-5M5 15v7h4v-7"
              strokeWidth="2"
            />
          </svg>
          Tableau Public Desktop
          <a href="#upgrade" className="ml-auto">
            Upgrade
          </a>
        </div>

        <Toolbar />

        <main className="flex flex-1 pr-3">
          <DataPane />
          <div className="flex min-w-0 flex-1 gap-3 pb-3 pl-3">
            <Cards />
            <div className="flex min-w-0 flex-1 flex-col gap-3">
              <Shelf
                title="열"
                icon={
                  <svg viewBox="0 0 26 26" className="w-[26px]" fill="#666">
                    <path d="M3 0h4v4H3zM11 0h4v4h-4zM19 0h4v4h-4zM3 6h4v18H3zM11 6h4v18h-4zM19 6h4v18h-4z" />
                  </svg>
                }
              >
                <Pill className="w-[296px] bg-[#4996b2] text-[22px]" trail={<SortBars />}>
                  측정값 이름
                </Pill>
              </Shelf>
              <Shelf
                title="행"
                icon={
                  <svg viewBox="0 0 26 26" className="w-[26px]" fill="#666">
                    <path d="M0 3h4v4H0zM6 3h19v4H6zM0 11h4v4H0zM6 11h19v4H6zM0 19h4v4H0zM6 19h19v4H6z" />
                  </svg>
                }
              >
                <Pill className="w-[296px] bg-[#4996b2]" lead={<Expander open />}>
                  년(Ord Date)
                </Pill>
                <Pill className="w-[296px] bg-[#4996b2]" lead={<Expander open />}>
                  분기(Ord Date)
                </Pill>
                <Pill className="w-[296px] bg-[#4996b2]" lead={<Expander open={false} />}>
                  월(Ord Date)
                </Pill>
              </Shelf>

              <div className="flex flex-1 gap-3">
                <div className="flex-1 border-2 border-[#d4d4d4] bg-white pl-[18px]">
                  <h2 className="mb-6 mt-6 text-[38px] leading-12 text-[#333]">
                    전년대비성장률
                  </h2>
                  <Crosstab />
                </div>
                <div className="flex w-[308px] flex-col gap-3">
                  {legends.map((legend) => (
                    <Legend key={legend.max} {...legend} />
                  ))}
                </div>
              </div>
            </div>
          </div>
        </main>

        <SheetTabs />
        <StatusBar />
        <ColorDialog />
      </div>
    </div>
  );
};

export default App;
